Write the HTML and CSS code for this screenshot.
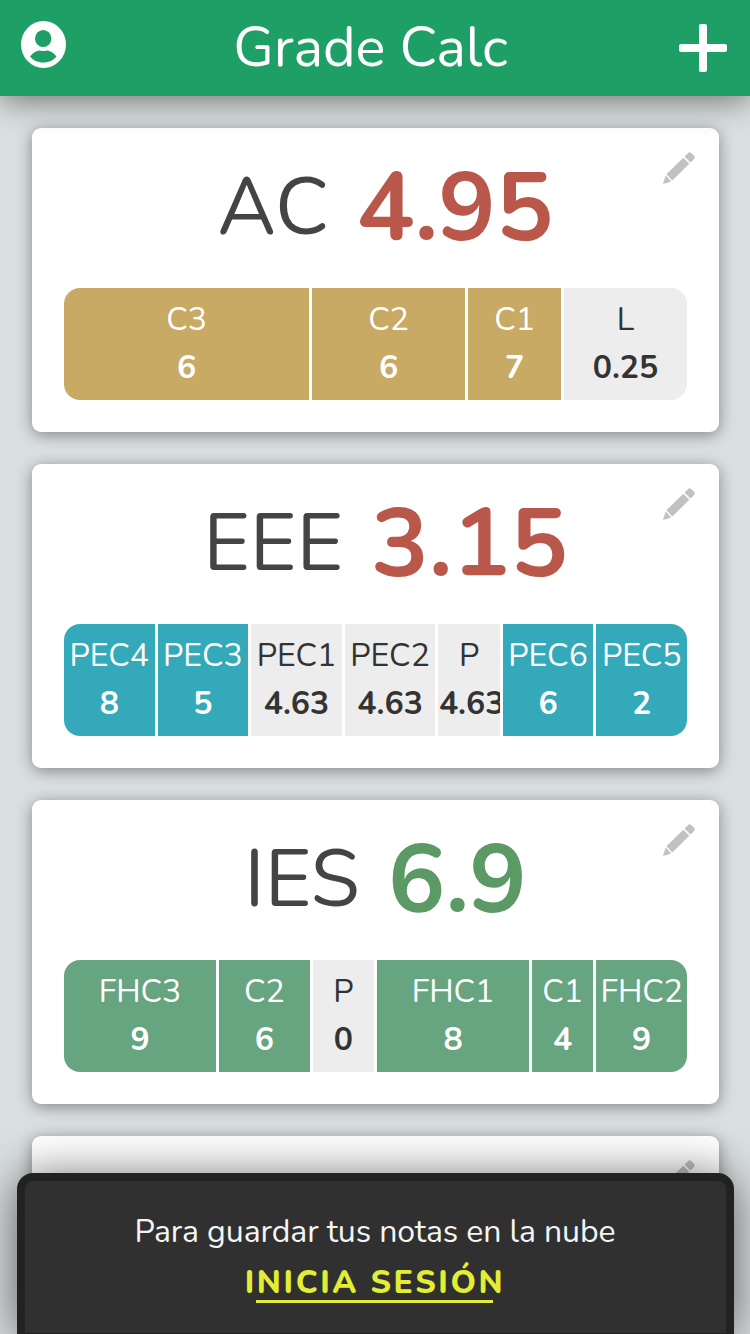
FILE: index.html
```html
<!DOCTYPE html>
<html lang="es">
<head>
<meta charset="utf-8">
<title>Grade Calc</title>
<link rel="stylesheet" href="styles.css">
</head>
<body>
<svg class="defs" width="0" height="0">
  <symbol id="pencil" viewBox="0 0 32 32"><path d="M0 32 2.600 23.600 8.300 29.500ZM3.400 22.300 20.300 5.800 26.300 11.700 9.400 28.500ZM21.500 4.500 24.900 1.200Q26.600-.6 28.400 1.200L30.800 3.600Q32.600 5.400 30.800 7.200L27.500 10.500Z"/></symbol>
</svg>
<header class="bar">
  <svg class="account" viewBox="0 0 45 47"><ellipse cx="22.500" cy="23.500" rx="22.500" ry="23.500"/><g class="person"><ellipse cx="22.200" cy="17.500" rx="8.200" ry="8.600"/><path d="M9 35.500C12 31.500 16 29.300 19 29.500Q22.200 30.700 25.500 29.500C28.500 29.300 32.500 31.500 35.500 35.500 32.500 39.300 28 41.500 22.200 41.500S12 39.300 9 35.500Z"/></g></svg>
  <h1 class="title">Grade Calc</h1>
  <svg class="plus" viewBox="0 0 48 48"><rect x="20" width="8" height="48" rx="2"/><rect y="20" width="48" height="8" rx="2"/></svg>
</header>
<main class="list">
  <section class="card">
    <svg class="edit"><use href="#pencil"/></svg>
    <h2 class="head"><span class="name">AC</span><span class="avg fail">4.95</span></h2>
    <div class="row gold">
      <div class="cell w245"><span>C3</span><b>6</b></div>
      <div class="cell w153"><span>C2</span><b>6</b></div>
      <div class="cell w93"><span>C1</span><b>7</b></div>
      <div class="cell w123 empty"><span>L</span><b>0.25</b></div>
    </div>
  </section>
  <section class="card">
    <svg class="edit"><use href="#pencil"/></svg>
    <h2 class="head"><span class="name">EEE</span><span class="avg fail">3.15</span></h2>
    <div class="row teal">
      <div class="cell w91"><span>PEC4</span><b>8</b></div>
      <div class="cell w91"><span>PEC3</span><b>5</b></div>
      <div class="cell w91 empty"><span>PEC1</span><b>4.63</b></div>
      <div class="cell w91 empty"><span>PEC2</span><b>4.63</b></div>
      <div class="cell w61 empty"><span>P</span><b class="cut">4.63</b></div>
      <div class="cell w91"><span>PEC6</span><b>6</b></div>
      <div class="cell w91"><span>PEC5</span><b>2</b></div>
    </div>
  </section>
  <section class="card">
    <svg class="edit"><use href="#pencil"/></svg>
    <h2 class="head"><span class="name">IES</span><span class="avg pass">6.9</span></h2>
    <div class="row green">
      <div class="cell w152"><span>FHC3</span><b>9</b></div>
      <div class="cell w91"><span>C2</span><b>6</b></div>
      <div class="cell w61 empty"><span>P</span><b>0</b></div>
      <div class="cell w152"><span>FHC1</span><b>8</b></div>
      <div class="cell w61"><span>C1</span><b>4</b></div>
      <div class="cell w91"><span>FHC2</span><b>9</b></div>
    </div>
  </section>
  <section class="card last">
    <svg class="edit"><use href="#pencil"/></svg>
  </section>
</main>
<aside class="toast">
  <p class="msg">Para guardar tus notas en la nube</p>
  <a class="login">INICIA SESIÓN</a>
</aside>
</body>
</html>
```
FILE: styles.css
```css
* { box-sizing: border-box; margin: 0; }
body {
  height: 1334px;
  overflow: hidden;
  background: #dadfe0;
  color: #333;
  font-family: Nunito, Lato, "Open Sans", sans-serif;
}
.defs { position: absolute; }
.bar {
  position: relative;
  z-index: 1;
  display: flex;
  justify-content: space-between;
  height: 96px;
  padding: 0 23px 0 21px;
  background: #1d9f65;
  color: #fff;
  fill: #fff;
  box-shadow: 0 4px 32px rgba(0, 0, 0, .5);
}
.account { width: 45px; height: 47px; margin-top: 21px; }
.person { fill: #1d9f65; }
.plus { width: 48px; height: 48px; margin-top: 24px; }
.title {
  margin-right: 4px;
  font-size: 56px;
  font-weight: 400;
  line-height: 96px;
  letter-spacing: -.1px;
  white-space: nowrap;
}
.list { display: grid; gap: 32px; padding: 32px 31px 0 32px; }
.card {
  position: relative;
  height: 304px;
  padding: 0 32px;
  border-radius: 9px;
  background: #fff;
  box-shadow: 0 3px 16px rgba(0, 0, 0, .4);
}
.card.last { height: 198px; border-radius: 9px 9px 0 0; }
.edit {
  position: absolute;
  top: 24px;
  right: 24px;
  width: 32px;
  height: 32px;
  fill: #c1c1c1;
}
.head {
  display: flex;
  justify-content: center;
  align-items: center;
  gap: 28px;
  height: 160px;
  padding-left: 20px;
  line-height: 160px;
  white-space: nowrap;
}
.name { color: #444; font-size: 80px; font-weight: 400; }
.avg { padding-top: 1px; font-size: 96px; font-weight: 700; }
.fail { color: #b9574b; }
.pass { color: #5b9965; }
.row {
  display: flex;
  gap: 3px;
  height: 112px;
  overflow: hidden;
  border-radius: 16px;
  color: #fff;
}
.cell {
  display: flex;
  flex-direction: column;
  align-items: center;
  flex-basis: 0;
  min-width: 0;
  overflow: hidden;
  padding-top: 8px;
  font-size: 32px;
  line-height: 48px;
}
.cell b { font-weight: 700; }
.cell .cut { align-self: flex-start; padding-left: .5px; }
.w245 { flex-grow: 245; }
.w153 { flex-grow: 153; }
.w93 { flex-grow: 93; }
.w123 { flex-grow: 123; }
.w91 { flex-grow: 90.600; }
.w61 { flex-grow: 61.400; }
.w152 { flex-grow: 152; }
.gold .cell { background: #c8aa65; }
.teal .cell { background: #33a9ba; }
.green .cell { background: #66a580; }
.row .empty { background: #ededed; color: #333; }
.toast {
  position: absolute;
  z-index: 2;
  top: 1173px;
  left: 16.500px;
  display: flex;
  flex-direction: column;
  align-items: center;
  width: 717px;
  height: 161px;
  padding-top: 27px;
  border: 8px solid #222;
  border-bottom-width: 1px;
  border-radius: 16px 16px 0 0;
  background: #303030;
  color: #f5f5f5;
  box-shadow: 0 4px 48px rgba(0, 0, 0, .6);
  font-size: 32px;
  line-height: 48px;
}
.msg { letter-spacing: -.08px; }
.login {
  position: relative;
  color: #e3ed35;
  font-weight: 800;
  letter-spacing: 2.600px;
  line-height: 54px;
}
.login::after {
  content: "";
  position: absolute;
  bottom: 7px;
  left: 50%;
  width: 237px;
  height: 3px;
  margin-left: -119px;
  background: #e3ed35;
}
```
